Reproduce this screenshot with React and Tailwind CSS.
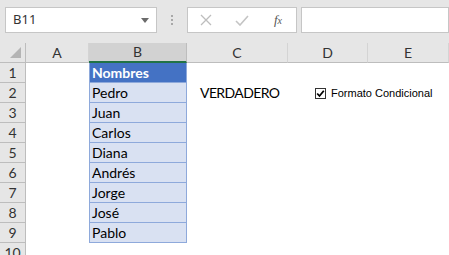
import React from "react";

const cols = [
  { l: "A", w: "w-[63px]" },
  { l: "B", w: "w-[98px]" },
  { l: "C", w: "w-[101px]" },
  { l: "D", w: "w-[80px]" },
  { l: "E", w: "flex-1" },
];

const names = ["Pedro", "Juan", "Carlos", "Diana", "Andrés", "Jorge", "José", "Pablo"];

export default function App() {
  return (
    <div className="w-[449px] h-[255px] overflow-hidden bg-white" style={{ fontFamily: "Lato, 'Open Sans', sans-serif" }}>
      {/* toolbar */}
      <div className="h-[43px] bg-[#e6e6e6] flex items-start pt-[7px] pl-[5px]">
        <div className="w-[152px] h-[26px] bg-white border border-[#c6c6c6] flex items-center pl-[7px] pr-[7px] justify-between">
          <span className="text-[13px] text-[#333]" style={{ fontFamily: "'Noto Sans', sans-serif" }}>B11</span>
          <svg width="8" height="5" viewBox="0 0 8 5"><path d="M0 0H8L4 5Z" fill="#6b6b6b" /></svg>
        </div>
        <div className="w-[30px] h-[26px] flex flex-col items-center justify-center gap-[2px]">
          <span className="w-[2px] h-[2px] bg-[#a8a8a8]" />
          <span className="w-[2px] h-[2px] bg-[#a8a8a8]" />
          <span className="w-[2px] h-[2px] bg-[#a8a8a8]" />
        </div>
        <div className="w-[110px] h-[26px] bg-white border border-[#c6c6c6] flex items-center">
          <div className="w-[36px] flex justify-center">
            <svg width="12" height="12" viewBox="0 0 12 12"><path d="M1 1L11 11M11 1L1 11" stroke="#bdbdbd" strokeWidth="1.3" /></svg>
          </div>
          <div className="w-[36px] flex justify-center">
            <svg width="14" height="11" viewBox="0 0 14 11"><path d="M1 6L5 10L13 1" stroke="#c4c4c4" strokeWidth="1.6" fill="none" /></svg>
          </div>
          <div className="w-[36px] flex justify-center">
            <span className="text-[13px] italic text-[#555]" style={{ fontFamily: "'Liberation Serif', serif" }}>f<span className="text-[10px]">x</span></span>
          </div>
        </div>
        <div className="ml-[4px] flex-1 h-[26px] bg-white border border-[#c6c6c6]" />
      </div>
      {/* column headers */}
      <div className="flex h-[20px] bg-[#e6e6e6] text-[14px] text-[#333]">
        <div className="w-[26px] border-r border-b border-[#bdbdbd] relative">
          <svg className="absolute right-[4px] bottom-[4px]" width="11" height="11" viewBox="0 0 11 11"><path d="M11 0V11H0Z" fill="#b4b4b4" /></svg>
        </div>
        {cols.map((c) =>
          c.l === "B" ? (
            <div key={c.l} className={`${c.w} bg-[#d2d2d2] border-r border-[#bdbdbd] border-b-2 border-b-[#217346] flex items-center justify-center leading-none`}>{c.l}</div>
          ) : (
            <div key={c.l} className={`${c.w} border-r border-b border-[#d4d4d4] border-b-[#bdbdbd] flex items-center justify-center leading-none`}>{c.l}</div>
          )
        )}
      </div>
      {/* rows */}
      {Array.from({ length: 10 }, (_, i) => i + 1).map((r) => (
        <div key={r} className="flex h-[20px] text-[14px]">
          <div className="w-[26px] bg-[#e6e6e6] border-r border-b border-[#bdbdbd] flex items-center justify-center text-[#333] leading-none">{r}</div>
          <div className="w-[63px]" />
          {r <= 9 ? (
            r === 1 ? (
              <div className="w-[98px] bg-[#4472c4] border-x border-b border-[#8ea9db] flex items-center pl-[2px] text-white font-bold leading-none">Nombres</div>
            ) : (
              <div className="w-[98px] bg-[#d9e1f2] border-x border-b border-[#8ea9db] flex items-center pl-[2px] text-black leading-none">{names[r - 2]}</div>
            )
          ) : (
            <div className="w-[98px]" />
          )}
          <div className="w-[101px] flex items-center pl-[13px] text-black leading-none tracking-[-0.6px]">{r === 2 ? "VERDADERO" : ""}</div>
          <div className="flex-1 flex items-center pl-[27px]">
            {r === 2 && (
              <div className="flex items-center gap-[5px]">
                <div className="w-[11px] h-[11px] border border-[#333] bg-white flex items-center justify-center">
                  <svg width="9" height="9" viewBox="0 0 9 9"><path d="M1.2 4.5L3.5 7L7.8 1.8" stroke="#000" strokeWidth="1.8" fill="none" /></svg>
                </div>
                <span className="text-[11px] text-black leading-none" style={{ fontFamily: "'Liberation Sans', sans-serif" }}>Formato Condicional</span>
              </div>
            )}
          </div>
        </div>
      ))}
    </div>
  );
}
